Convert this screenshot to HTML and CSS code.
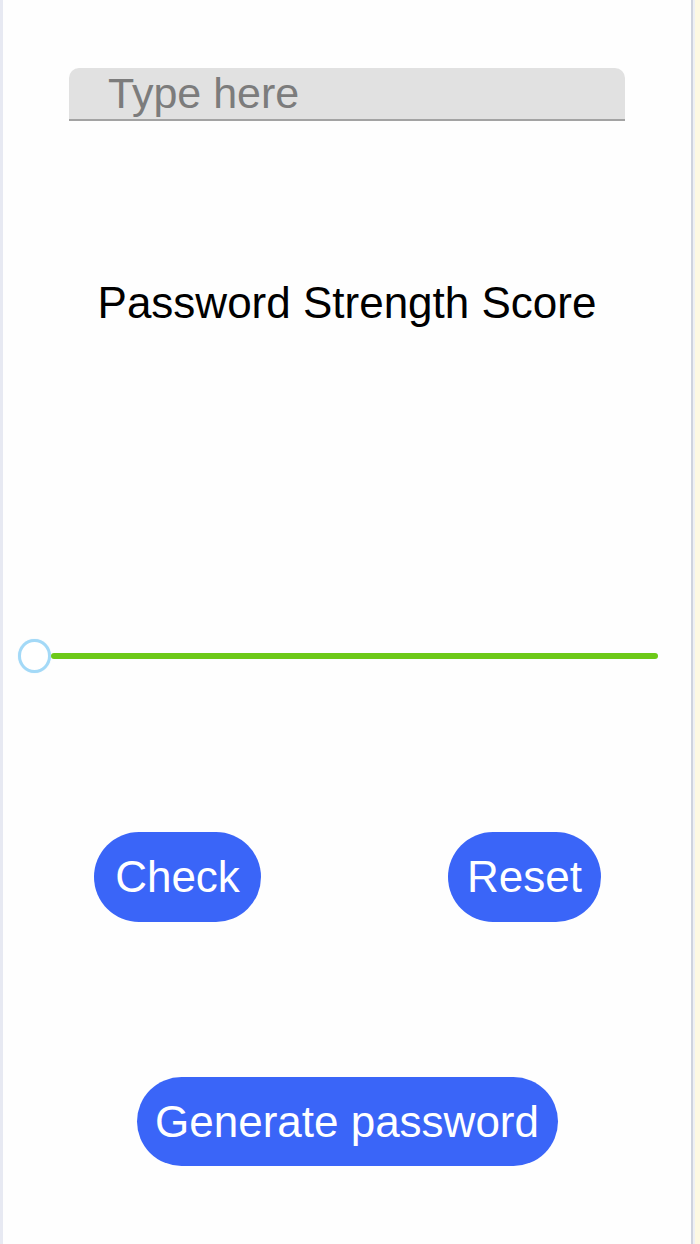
FILE: index.html
```html
<!DOCTYPE html>
<html lang="en">
<head>
<meta charset="utf-8">
<title>Password Strength</title>
<link rel="stylesheet" href="styles.css">
</head>
<body>
<div class="frame">
  <div class="edge-left"></div>
  <main class="screen">
    <div class="field">
      <input class="field-input" type="text" placeholder="Type here">
    </div>
    <h1 class="score-title">Password Strength Score</h1>
    <div class="slider">
      <span class="slider-thumb"></span>
      <span class="slider-track"></span>
    </div>
    <div class="actions">
      <button class="pill pill-check" type="button">Check</button>
      <button class="pill pill-reset" type="button">Reset</button>
    </div>
    <div class="generate-row">
      <button class="pill pill-generate" type="button">Generate password</button>
    </div>
  </main>
  <div class="edge-right">
    <span class="edge-line"></span>
    <span class="edge-gap"></span>
    <span class="edge-tint"></span>
  </div>
</div>
</body>
</html>
```

FILE: styles.css
```css
* {
  box-sizing: border-box;
}

html, body {
  margin: 0;
  padding: 0;
  background: #fefefe;
}

body {
  font-family: "Liberation Sans", Arial, sans-serif;
  color: #000;
}

.frame {
  display: flex;
  width: 700px;
  height: 1244px;
}

.edge-left {
  width: 3px;
  background: #e7e9f2;
}

.edge-right {
  display: flex;
  width: 9px;
}

.edge-line {
  width: 2px;
  background: #cfd3de;
}

.edge-gap {
  width: 2px;
  background: #eef0f4;
}

.edge-tint {
  flex: 1;
  background: #fdf8e2;
}

.screen {
  flex: 1;
  display: flex;
  flex-direction: column;
  padding-top: 68px;
}

/* text field */
.field {
  padding: 0 66px;
}

.field-input {
  display: block;
  width: 556px;
  height: 53px;
  margin: 0;
  padding: 0 0 0 39px;
  border: 0;
  border-bottom: 2px solid #a3a3a3;
  border-radius: 10px 10px 0 0;
  background: #e1e1e1;
  font-family: "Liberation Sans", Arial, sans-serif;
  font-size: 43px;
  color: #333;
  outline: none;
}

.field-input::placeholder {
  color: #7c7c7c;
}

/* heading */
.score-title {
  margin: 160px 0 0;
  font-size: 44px;
  line-height: 44px;
  font-weight: normal;
  text-align: center;
}

/* score slider */
.slider {
  display: flex;
  align-items: center;
  margin-top: 314px;
  padding: 0 33px 0 15px;
  height: 34px;
}

.slider-thumb {
  flex: none;
  width: 33px;
  height: 34px;
  border: 3px solid #a3d9f7;
  border-radius: 50%;
  background: #fff;
  box-shadow: 0 0 1px #bfe4fa;
}

.slider-track {
  flex: 1;
  height: 6px;
  border-radius: 3px;
  background: #6dc918;
}

/* buttons */
.actions {
  display: flex;
  justify-content: space-between;
  margin-top: 159px;
  padding: 0 90px 0 91px;
}

.pill {
  height: 90px;
  margin: 0;
  padding: 0;
  border: 0;
  border-radius: 45px;
  background: #3a65f8;
  color: #fff;
  font-family: "Liberation Sans", Arial, sans-serif;
  font-size: 44px;
  cursor: pointer;
}

.pill-check {
  width: 167px;
}

.pill-reset {
  width: 153px;
}

.generate-row {
  display: flex;
  justify-content: center;
  margin-top: 155px;
}

.pill-generate {
  width: 421px;
  height: 89px;
}
```
